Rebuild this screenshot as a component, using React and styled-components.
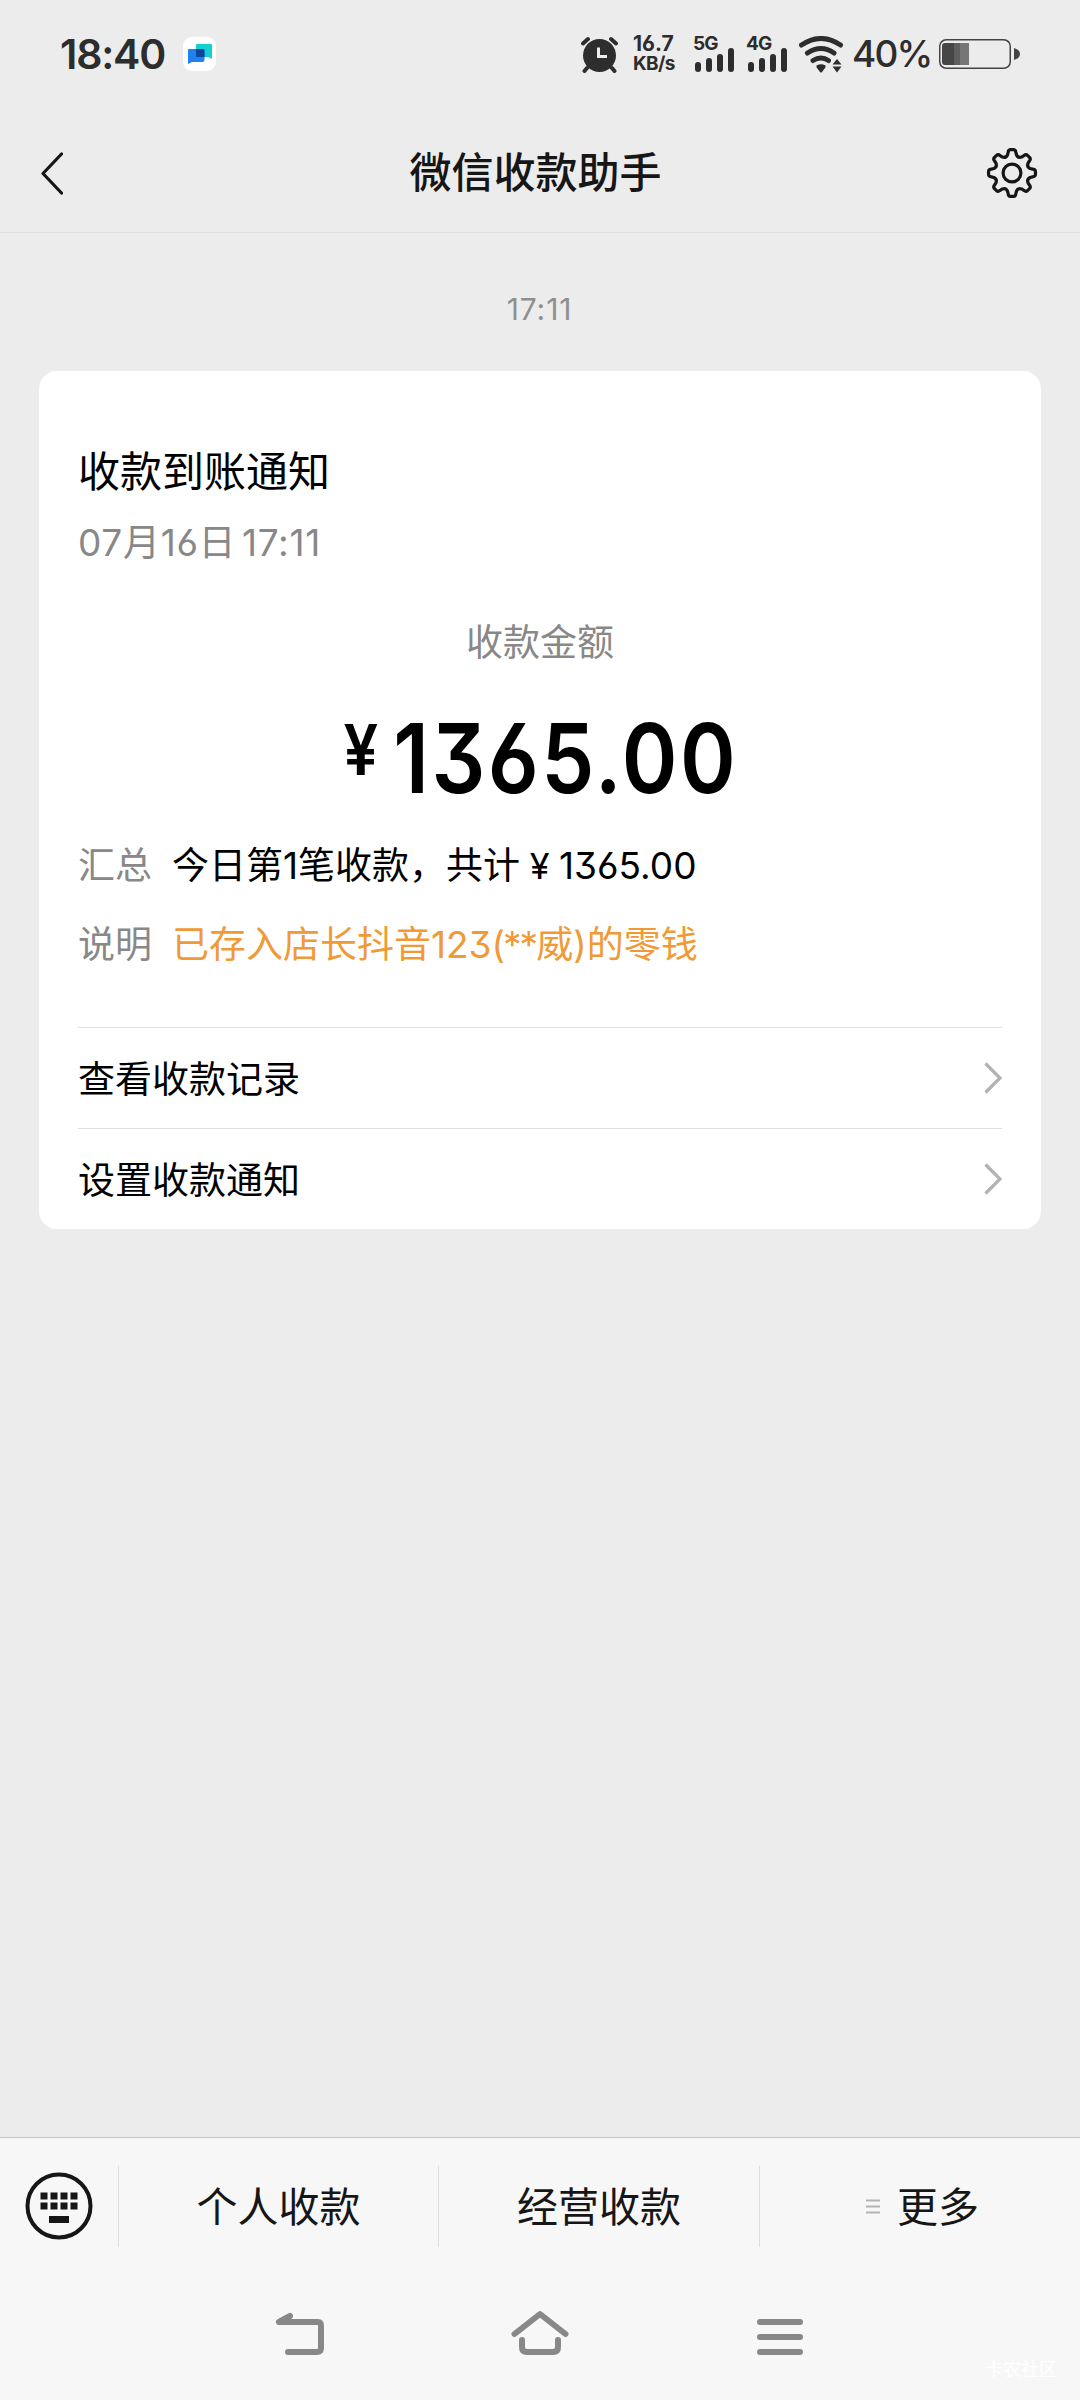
import React from "react";
import styled, { createGlobalStyle } from "styled-components";

const Global = createGlobalStyle`
  * { box-sizing: border-box; }
  html, body { margin: 0; padding: 0; background: #ececec; }
  body {
    font-family: Inter, "Noto Sans CJK SC", sans-serif;
    font-feature-settings: "cv03", "cv09";
  }
  svg { display: block; flex: none; }
`;

const Screen = styled.div`
  width: 1080px;
  height: 2400px;
  display: flex;
  flex-direction: column;
  background: #ececec;
  overflow: hidden;
`;

const StatusBar = styled.div`
  height: 108px;
  padding: 0 59px 0 60px;
  display: flex;
  align-items: center;
  justify-content: space-between;
  color: #2d2d2d;
`;

const StatusGroup = styled.div`
  display: flex;
  align-items: center;
`;

const Clock = styled.div`
  width: 123px;
  font-size: 41px;
  font-weight: 600;
  line-height: 50px;
  letter-spacing: -1.2px;
  white-space: nowrap;
`;

const AppBadge = styled.div`
  width: 33px;
  height: 34px;
  border-radius: 9px;
  background: #fff;
`;

const NetSpeed = styled.div`
  width: 60px;
  margin-left: 15px;
  display: flex;
  flex-direction: column;
  font-size: 21px;
  font-weight: 700;
  line-height: 20px;
`;

const SpeedUnit = styled.span`
  font-size: 19px;
  letter-spacing: -0.6px;
`;

const Percent = styled.div`
  width: 87px;
  margin-left: 9px;
  font-size: 37px;
  font-weight: 500;
  line-height: 44px;
  letter-spacing: -1.8px;
  white-space: nowrap;
`;

const Signal = styled.div`
  width: 53px;
  height: 36px;
  display: flex;
  flex-direction: column;
  justify-content: space-between;
`;

const SignalLabel = styled.div`
  height: 12px;
  font-size: 19px;
  font-weight: 700;
  line-height: 15px;
  letter-spacing: -0.8px;
`;

const SignalBars = styled.div`
  display: flex;
  align-items: flex-end;
  gap: 5px;
  padding-left: 2px;
  height: 24px;
`;

const SignalBar = styled.div`
  width: 6px;
  height: ${(p) => p.$h}px;
  border-radius: 3px;
  background: #2d2d2d;
`;

const Header = styled.div`
  height: 125px;
  padding: 0 42px 0 40px;
  display: flex;
  align-items: center;
  justify-content: space-between;
  border-bottom: 1px solid #dfdfdf;
`;

const HeaderSide = styled.div`
  width: 60px;
  height: 56px;
  display: flex;
  align-items: center;
  justify-content: ${(p) => (p.$end ? "flex-end" : "flex-start")};
  margin-top: 6px;
`;

const HeaderTitle = styled.h1`
  margin: 6px 0 0;
  padding-right: 7px;
  font-size: 42px;
  line-height: 60px;
  font-weight: 500;
  color: #161616;
`;

const Thread = styled.main`
  flex: 1;
  padding: 0 39px;
  display: flex;
  flex-direction: column;
  align-items: stretch;
`;

const Timestamp = styled.div`
  margin: 56px 0 42px;
  padding-right: 1px;
  text-align: center;
  font-size: 30px;
  line-height: 40px;
  letter-spacing: 0.9px;
  color: #8f8f8f;
`;

const Card = styled.section`
  height: 858px;
  padding: 71px 39px 0;
  border-radius: 18px;
  background: #fff;
  display: flex;
  flex-direction: column;
`;

const CardTitle = styled.h2`
  margin: 0;
  font-size: 42px;
  font-weight: 400;
  line-height: 60px;
  color: #000;
`;

const CardDate = styled.div`
  margin-top: 16px;
  font-size: 37px;
  line-height: 50px;
  letter-spacing: 0.7px;
  word-spacing: -5.5px;
  color: #888;
`;

const AmountLabel = styled.div`
  margin-top: 50px;
  text-align: center;
  font-size: 37px;
  line-height: 50px;
  color: #888;
`;

const Amount = styled.div`
  margin-top: 40px;
  display: flex;
  justify-content: center;
  gap: 17px;
  font-weight: 600;
  color: #000;
  transform: scaleX(0.88);
`;

const Currency = styled.span`
  font-size: 70px;
  line-height: 84px;
`;

const Figure = styled.span`
  font-size: 96px;
  line-height: 100px;
  letter-spacing: 2.8px;
  margin-right: -2px;
`;

const Details = styled.dl`
  margin: 33px 0 0;
  display: grid;
  grid-template-columns: 94px 1fr;
  row-gap: 29px;
  font-size: 37px;
  line-height: 50px;
`;

const Term = styled.dt`
  color: #888;
`;

const Value = styled.dd`
  margin: 0;
  white-space: nowrap;
  color: ${(p) => (p.$accent ? "#f09a37" : "#000")};
`;

const Yen = styled.span`
  display: inline-block;
  width: 39px;
  text-align: center;
  font-size: 36px;
`;

const Masked = styled.span`
  letter-spacing: -2px;
`;

const Links = styled.nav`
  margin-top: auto;
`;

const LinkRow = styled.div`
  height: 101px;
  display: flex;
  align-items: center;
  justify-content: space-between;
  border-top: 1px solid #e0e0e0;
  font-size: 37px;
  line-height: 50px;
  color: #000;
`;

const LinkLabel = styled.span`
  padding-top: 3px;
`;

const Footer = styled.footer`
  height: 263px;
  background: #f7f7f7;
  border-top: 1px solid #c4c4c4;
  display: flex;
  flex-direction: column;
`;

const MenuBar = styled.div`
  height: 136px;
  display: grid;
  grid-template-columns: 118px 320px 321px 1fr;
  align-items: center;
`;

const KeyboardCell = styled.div`
  display: flex;
  justify-content: center;
`;

const MenuItem = styled.div`
  height: 81px;
  padding: 1px 0 0 ${(p) => (p.$indent ? 4 : 0)}px;
  display: flex;
  align-items: center;
  justify-content: center;
  gap: 17px;
  border-left: 1px solid #dedede;
  font-size: 41px;
  line-height: 60px;
  color: #161616;
`;

const SystemNav = styled.div`
  height: 126px;
  padding: 35px 0 0 0;
  display: grid;
  grid-template-columns: 240px 240px 240px;
  justify-content: center;
  justify-items: center;
  align-items: start;
  position: relative;
`;

const Watermark = styled.span`
  position: absolute;
  right: 23px;
  bottom: 17px;
  font-size: 18px;
  line-height: 26px;
  color: #fff;
`;

const BadgeIcon = () => (
  <AppBadge>
    <svg width="33" height="34" viewBox="0 0 33 34">
      <path d="M14 7H28a1 1 0 0 1 1 1V22L25 20H14a1 1 0 0 1-1-1V8a1 1 0 0 1 1-1Z" fill="#12cfd0" />
      <path d="M6 12H20a1.500 1.500 0 0 1 1.500 1.500V23a2 2 0 0 1-2 2H9L5 27V13a1 1 0 0 1 1-1Z" fill="#2180f0" />
      <path d="M13 12H20a1.500 1.500 0 0 1 1.500 1.500V20H14a1 1 0 0 1-1-1Z" fill="#0a469c" />
    </svg>
  </AppBadge>
);

const AlarmIcon = () => (
  <svg width="37" height="37" viewBox="0 0 37 37">
    <g stroke="#2d2d2d" strokeWidth="4" strokeLinecap="round">
      <path d="M2 7.500L7 3M35 7.500L30 3M6 32L3.500 35M31 32L33.500 35" />
    </g>
    <circle cx="18.500" cy="19.500" r="16.500" fill="#2d2d2d" />
    <path d="M17.500 11.500V20.500H26" fill="none" stroke="#ececec" strokeWidth="3" />
  </svg>
);

const WifiIcon = () => (
  <svg width="44" height="37" viewBox="0 0 44 37">
    <g fill="none" stroke="#2d2d2d" strokeWidth="5" strokeLinecap="round">
      <path d="M2.500 9Q22 -4 41.500 9" />
      <path d="M8.500 17Q22 8 35 17" />
      <path d="M14 24.500Q22 19.500 29.500 24.500" />
    </g>
    <path d="M17.500 29.500Q22 27 26.500 29.500Q27 31 26 32L23 36Q22 37 21 36L18 32Q17 31 17.500 29.500Z" fill="#2d2d2d" />
    <path d="M33.500 28.500L38 23L42.500 28.500ZM33.500 30.500L38 36.500L42.500 30.500Z" fill="#2d2d2d" />
  </svg>
);

const BatteryIcon = () => (
  <svg width="82" height="30" viewBox="0 0 82 30">
    <rect x="0.750" y="0.750" width="70.500" height="28.500" rx="6.500" fill="none" stroke="#444" strokeWidth="1.500" />
    <path d="M6 4H15V26H6a3 3 0 0 1-3-3V7a3 3 0 0 1 3-3Z" fill="#454545" />
    <rect x="15" y="4" width="6" height="22" fill="#5e5e5e" />
    <rect x="21" y="4" width="9" height="22" fill="#767676" />
    <path d="M75 9Q81 11 81 15T75 21Z" fill="#444" />
  </svg>
);

const BackIcon = () => (
  <svg width="23" height="43" viewBox="0 0 23 43">
    <path d="M21.500 2L3 21.500L21.500 41" fill="none" stroke="#161616" strokeWidth="3.200" strokeLinejoin="round" strokeLinecap="round" />
  </svg>
);

const gearPath = (() => {
  const pt = (r, deg) => {
    const a = ((deg - 90) * Math.PI) / 180;
    return `${(26 + r * Math.cos(a)).toFixed(2)} ${(26 + r * Math.sin(a)).toFixed(2)}`;
  };
  const parts = [];
  for (let i = 0; i < 8; i += 1) {
    const c = i * 45;
    parts.push(`${i ? "L" : "M"}${pt(23.5, c - 4)}L${pt(23.5, c + 4)}`);
    parts.push(`Q${pt(23.5, c + 9)} ${pt(21, c + 10.5)}`);
    parts.push(`L${pt(18.6, c + 14)}`);
    parts.push(`Q${pt(16, c + 22.5)} ${pt(18.6, c + 31)}`);
    parts.push(`L${pt(21, c + 34.5)}`);
    parts.push(`Q${pt(23.5, c + 36)} ${pt(23.5, c + 41)}`);
  }
  return `${parts.join("")}Z`;
})();

const GearIcon = () => (
  <svg width="52" height="52" viewBox="0 0 52 52" fill="none" stroke="#161616" strokeWidth="3.200" strokeLinejoin="round">
    <path d={gearPath} />
    <circle cx="26" cy="26" r="8.900" />
  </svg>
);

const ChevronIcon = () => (
  <svg width="19" height="32" viewBox="0 0 19 32">
    <path d="M2.500 1.500L17 16L2.500 30.500" fill="none" stroke="#b2b2b2" strokeWidth="3.200" />
  </svg>
);

const KeyboardIcon = () => (
  <svg width="68" height="68" viewBox="0 0 68 68" fill="#161616">
    <circle cx="34" cy="34" r="31.500" fill="none" stroke="#161616" strokeWidth="4" />
    {[20.5, 30.5].map((y) =>
      [15.5, 25.5, 35.5, 45.5].map((x) => <rect key={`${x}-${y}`} x={x} y={y} width="7" height="7" />)
    )}
    <rect x="24" y="44" width="20" height="7" />
  </svg>
);

const SmallMenuIcon = () => (
  <svg width="15" height="15" viewBox="0 0 15 15">
    <path d="M1 1.500H15M1 7.500H15M1 13.500H15" stroke="#b4b4b4" strokeWidth="1.800" />
  </svg>
);

const navStroke = { fill: "none", stroke: "#888", strokeWidth: 6, strokeLinecap: "round", strokeLinejoin: "round" };

const NavBackIcon = () => (
  <svg width="50" height="50" viewBox="0 0 50 50" {...navStroke}>
    <path d="M15 7L4 13H43Q46 13 46 17V39Q46 43 42 43H13" />
  </svg>
);

const NavHomeIcon = () => (
  <svg width="58" height="50" viewBox="0 0 58 50" {...navStroke}>
    <path d="M3.500 25L29 5L54.500 25M11 31V38Q11 43 16 43H42Q47 43 47 38V31" />
  </svg>
);

const NavMenuIcon = () => (
  <svg width="46" height="50" viewBox="0 0 46 50" {...navStroke}>
    <path d="M3 13H43M3 28H43M3 43H43" />
  </svg>
);

const CellSignal = ({ label }) => (
  <Signal>
    <SignalLabel>{label}</SignalLabel>
    <SignalBars>
      {[10, 14, 18, 24].map((h) => (
        <SignalBar key={h} $h={h} />
      ))}
    </SignalBars>
  </Signal>
);

export default function App() {
  return (
    <Screen>
      <Global />
      <StatusBar>
        <StatusGroup>
          <Clock>18:40</Clock>
          <BadgeIcon />
        </StatusGroup>
        <StatusGroup>
          <AlarmIcon />
          <NetSpeed>
            <span>16.7</span>
            <SpeedUnit>KB/s</SpeedUnit>
          </NetSpeed>
          <CellSignal label="5G" />
          <CellSignal label="4G" />
          <WifiIcon />
          <Percent>40%</Percent>
          <BatteryIcon />
        </StatusGroup>
      </StatusBar>
      <Header>
        <HeaderSide>
          <BackIcon />
        </HeaderSide>
        <HeaderTitle>微信收款助手</HeaderTitle>
        <HeaderSide $end>
          <GearIcon />
        </HeaderSide>
      </Header>
      <Thread>
        <Timestamp>17:11</Timestamp>
        <Card>
          <CardTitle>收款到账通知</CardTitle>
          <CardDate>07月16日 17:11</CardDate>
          <AmountLabel>收款金额</AmountLabel>
          <Amount>
            <Currency>¥</Currency>
            <Figure>1365.00</Figure>
          </Amount>
          <Details>
            <Term>汇总</Term>
            <Value>
              今日第1笔收款，共计<Yen>¥</Yen>1365.00
            </Value>
            <Term>说明</Term>
            <Value $accent>
              已存入店长抖音123<Masked>(**</Masked>威)的零钱
            </Value>
          </Details>
          <Links>
            <LinkRow>
              <LinkLabel>查看收款记录</LinkLabel>
              <ChevronIcon />
            </LinkRow>
            <LinkRow>
              <LinkLabel>设置收款通知</LinkLabel>
              <ChevronIcon />
            </LinkRow>
          </Links>
        </Card>
      </Thread>
      <Footer>
        <MenuBar>
          <KeyboardCell>
            <KeyboardIcon />
          </KeyboardCell>
          <MenuItem>个人收款</MenuItem>
          <MenuItem>经营收款</MenuItem>
          <MenuItem $indent>
            <SmallMenuIcon />
            更多
          </MenuItem>
        </MenuBar>
        <SystemNav>
          <NavBackIcon />
          <NavHomeIcon />
          <NavMenuIcon />
          <Watermark>卡农社区</Watermark>
        </SystemNav>
      </Footer>
    </Screen>
  );
}
